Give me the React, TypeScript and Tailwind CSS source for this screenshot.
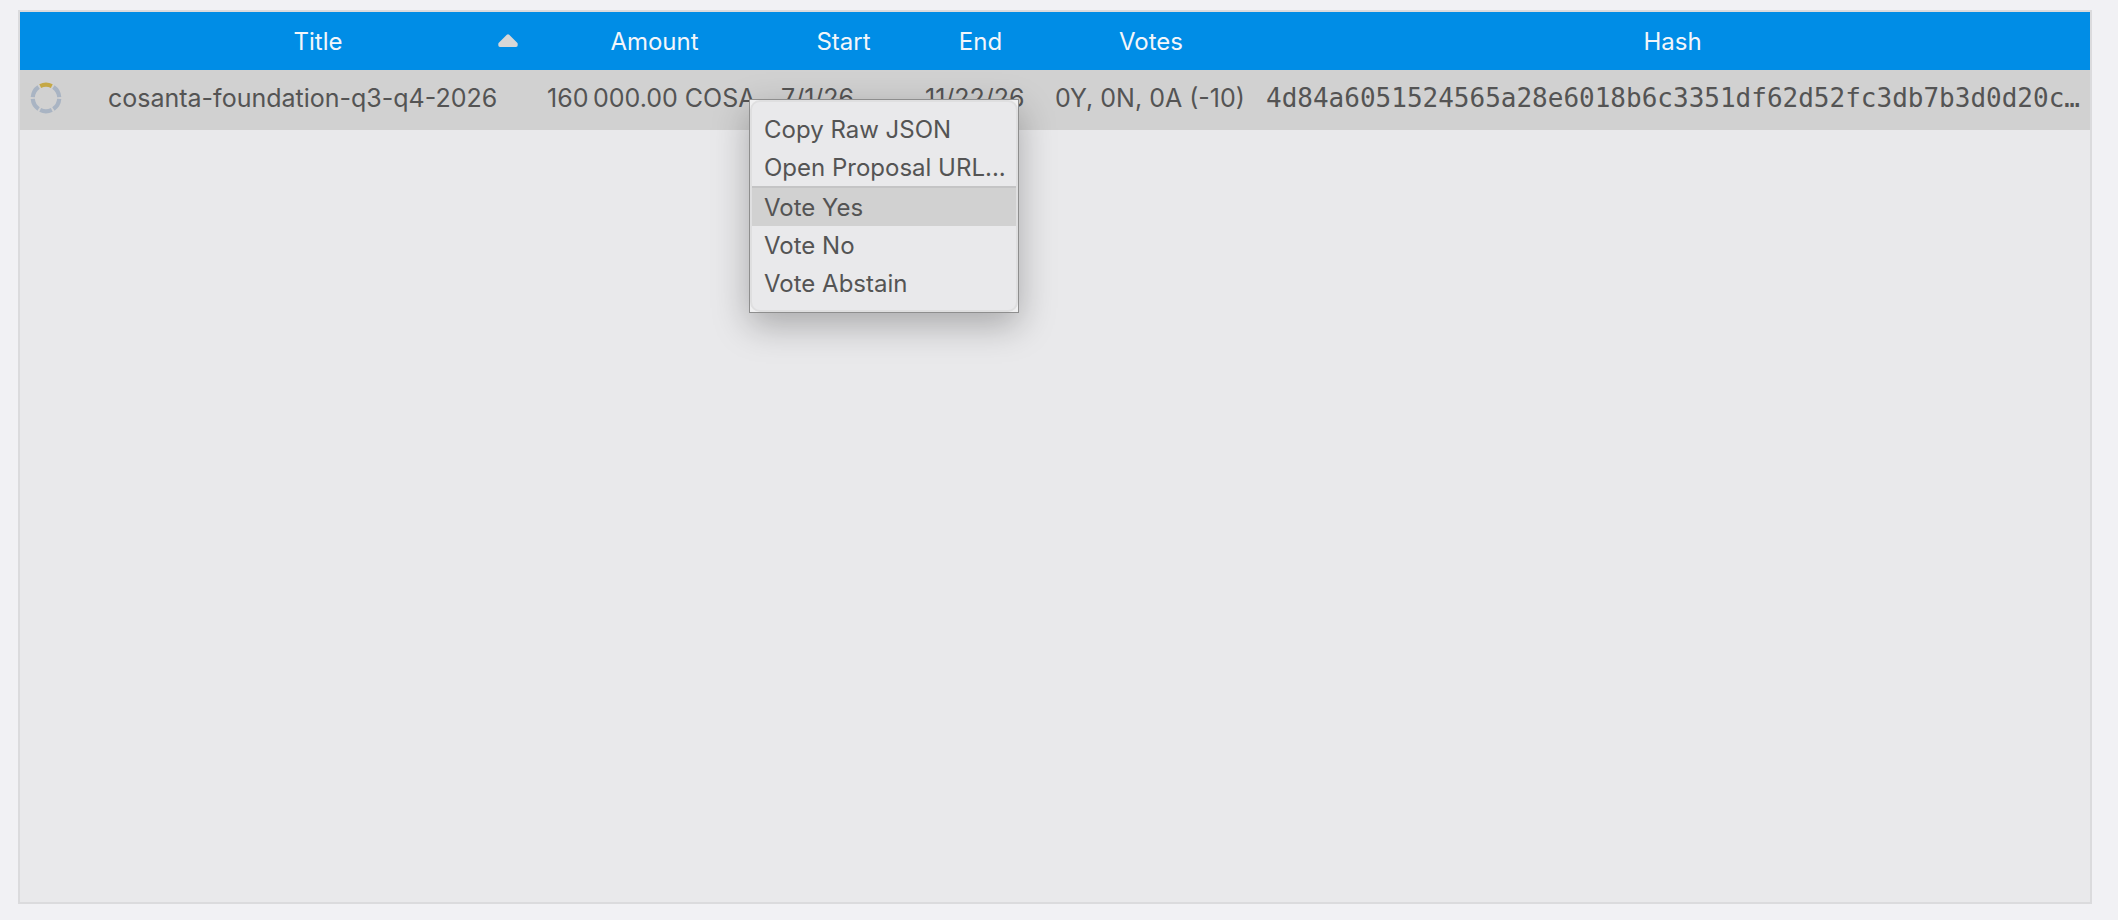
import React from "react";

const columns = [
  { label: "", width: "w-20" },
  { label: "Title", width: "w-[436px]" },
  { label: "Amount", width: "w-[237px]" },
  { label: "Start", width: "w-[141px]" },
  { label: "End", width: "w-[133px]" },
  { label: "Votes", width: "w-[208px]" },
  { label: "Hash", width: "" },
];

const arcs = [60, 120, 180, 240, 300, 0];

function ProgressRing() {
  return (
    <svg viewBox="0 0 32 32" className="block size-8" aria-label="Pending" role="img">
      {arcs.map((angle) => (
        <path
          key={angle}
          d="M10.2 4.1 A13.25 13.25 0 0 1 21.8 4.1"
          fill="none"
          stroke={angle === 0 ? "#c5a845" : "#a9b4c3"}
          strokeWidth="4.2"
          transform={`rotate(${angle} 16 16)`}
        />
      ))}
    </svg>
  );
}

function MenuItem({ label, active = false }: { label: string; active?: boolean }) {
  return (
    <button
      type="button"
      role="menuitem"
      className={`block h-[38px] w-full whitespace-nowrap px-3 text-left text-[24px] leading-10 ${
        active ? "bg-[#d1d1d1]" : ""
      }`}
    >
      {label}
    </button>
  );
}

export default function App() {
  return (
    <main className="flex min-h-screen flex-col bg-[#f1f1f4] pt-[10px] pr-[26px] pb-4 pl-[18px] font-['Inter',sans-serif] text-[#545454]">
      <section className="relative flex-1 border-2 border-[#dbdbdd] bg-[#e9e9eb]">
        <table className="w-full table-fixed border-collapse">
          <thead>
            <tr className="h-[58px] bg-[#008de6] text-[24px] text-[#f3f6fa]">
              {columns.map(({ label, width }) => (
                <th
                  key={label}
                  scope="col"
                  aria-sort={label === "Title" ? "ascending" : undefined}
                  className={`relative px-0 pt-[2px] pb-0 text-center font-normal ${width}`}
                >
                  {label}
                  {label === "Title" && (
                    <svg viewBox="0 0 20 14" className="absolute top-[22px] right-[18px] h-[14px] w-5" aria-hidden="true">
                      <path d="M10 2 L18 10 V11.3 H2 V10 Z" fill="#d7d7d7" stroke="#d7d7d7" strokeWidth="3.4" strokeLinejoin="round" />
                    </svg>
                  )}
                </th>
              ))}
            </tr>
          </thead>
          <tbody>
            <tr className="h-[60px] bg-[#d1d1d1] text-[25px] leading-8 whitespace-nowrap">
              <td className="pt-0 pb-1 pl-[10px]">
                <ProgressRing />
              </td>
              <td className="px-2 pt-0 pb-1">cosanta-foundation-q3-q4-2026</td>
              <td className="px-[11px] pt-0 pb-1">160&#8201;000.00 COSA</td>
              <td className="px-2 pt-0 pb-1">7/1/26</td>
              <td className="px-[11px] pt-0 pb-1">11/22/26</td>
              <td className="px-2 pt-0 pb-1">0Y, 0N, 0A (-10)</td>
              <td className="pt-0 pr-0 pb-[5px] pl-[11px] font-['DejaVu_Sans_Mono',monospace] text-[26px]">
                4d84a6051524565a28e6018b6c3351df62d52fc3db7b3d0d20c…
              </td>
            </tr>
          </tbody>
        </table>

        <div
          role="menu"
          className="absolute top-[87px] left-[729px] w-[270px] border border-[#8e8e8e] bg-[#f0f0f1] shadow-[0_12px_34px_rgba(0,0,0,0.28)]"
        >
          <div className="rounded-[10px] border-2 border-[#dfdfe0] bg-[#e9e9eb] py-2">
            <MenuItem label="Copy Raw JSON" />
            <MenuItem label="Open Proposal URL..." />
            <div role="separator" className="h-[2px] bg-[#c4c4c5]" />
            <MenuItem label="Vote Yes" active />
            <MenuItem label="Vote No" />
            <MenuItem label="Vote Abstain" />
          </div>
        </div>
      </section>
    </main>
  );
}
